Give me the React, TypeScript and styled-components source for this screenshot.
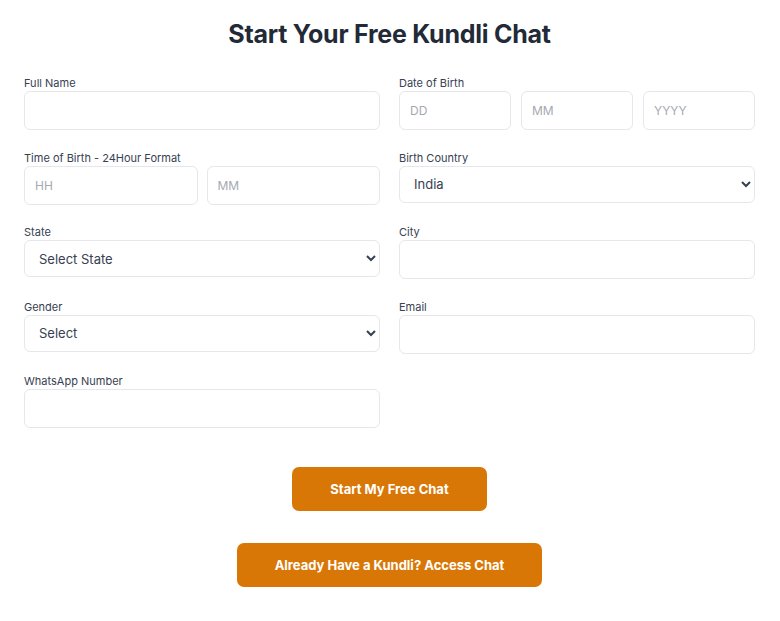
import React from 'react'
import styled, { createGlobalStyle } from 'styled-components'

const GlobalStyle = createGlobalStyle`
  * {
    box-sizing: border-box;
  }
  body {
    margin: 0;
    background: #ffffff;
    font-family: Inter, 'Noto Sans', sans-serif;
    color: #374151;
  }
`

const Page = styled.div`
  padding: 18px 25px 30px 24px;
`

const Title = styled.h1`
  margin: 0 0 26px;
  text-align: center;
  font-size: 25px;
  line-height: 32px;
  font-weight: 700;
  color: #222a38;
  letter-spacing: -0.25px;
`

const FormGrid = styled.div`
  display: grid;
  grid-template-columns: 1fr 1fr;
  column-gap: 19px;
  row-gap: 20.5px;
`

const Field = styled.div`
  display: flex;
  flex-direction: column;
`

const Label = styled.label`
  font-size: 11px;
  line-height: 14px;
  margin-bottom: 1px;
  color: #374151;
`

const InputRow = styled.div<{ $gap: number }>`
  display: flex;
  gap: ${({ $gap }) => $gap}px;

  & > * {
    flex: 1 1 0;
    min-width: 0;
  }
`

const Input = styled.input`
  width: 100%;
  height: 39px;
  padding: 0 10px;
  border: 1px solid #e5e7eb;
  border-radius: 6px;
  background: #ffffff;
  font-family: inherit;
  font-size: 12px;
  color: #374151;
  outline: none;

  &::placeholder {
    color: #a5a9b1;
  }
`

const Select = styled.select`
  width: 100%;
  height: 37px;
  padding: 0 8px 0 10px;
  border: 1px solid #e5e7eb;
  border-radius: 6px;
  background: #ffffff;
  font-family: inherit;
  font-size: 13px;
  color: #374151;
  outline: none;
`

const Actions = styled.div`
  display: flex;
  flex-direction: column;
  align-items: center;
  gap: 32px;
  margin-top: 39px;
`

const Button = styled.button`
  height: 44px;
  padding: 0 38px;
  border: none;
  border-radius: 7px;
  background: #d97706;
  color: #ffffff;
  font-family: inherit;
  font-size: 13px;
  font-weight: 700;
  cursor: pointer;
`

export default function App() {
  return (
    <>
      <GlobalStyle />
      <Page>
        <Title>Start Your Free Kundli Chat</Title>
        <FormGrid>
          <Field>
            <Label>Full Name</Label>
            <Input type="text" />
          </Field>
          <Field>
            <Label>Date of Birth</Label>
            <InputRow $gap={10}>
              <Input placeholder="DD" />
              <Input placeholder="MM" />
              <Input placeholder="YYYY" />
            </InputRow>
          </Field>

          <Field>
            <Label>Time of Birth - 24Hour Format</Label>
            <InputRow $gap={9}>
              <Input placeholder="HH" />
              <Input placeholder="MM" />
            </InputRow>
          </Field>
          <Field>
            <Label>Birth Country</Label>
            <Select defaultValue="India">
              <option>India</option>
            </Select>
          </Field>

          <Field>
            <Label>State</Label>
            <Select defaultValue="">
              <option value="">Select State</option>
            </Select>
          </Field>
          <Field>
            <Label>City</Label>
            <Input type="text" />
          </Field>

          <Field>
            <Label>Gender</Label>
            <Select defaultValue="">
              <option value="">Select</option>
              <option>Male</option>
              <option>Female</option>
            </Select>
          </Field>
          <Field>
            <Label>Email</Label>
            <Input type="email" />
          </Field>

          <Field>
            <Label>WhatsApp Number</Label>
            <Input type="tel" />
          </Field>
        </FormGrid>

        <Actions>
          <Button>Start My Free Chat</Button>
          <Button>Already Have a Kundli? Access Chat</Button>
        </Actions>
      </Page>
    </>
  )
}
